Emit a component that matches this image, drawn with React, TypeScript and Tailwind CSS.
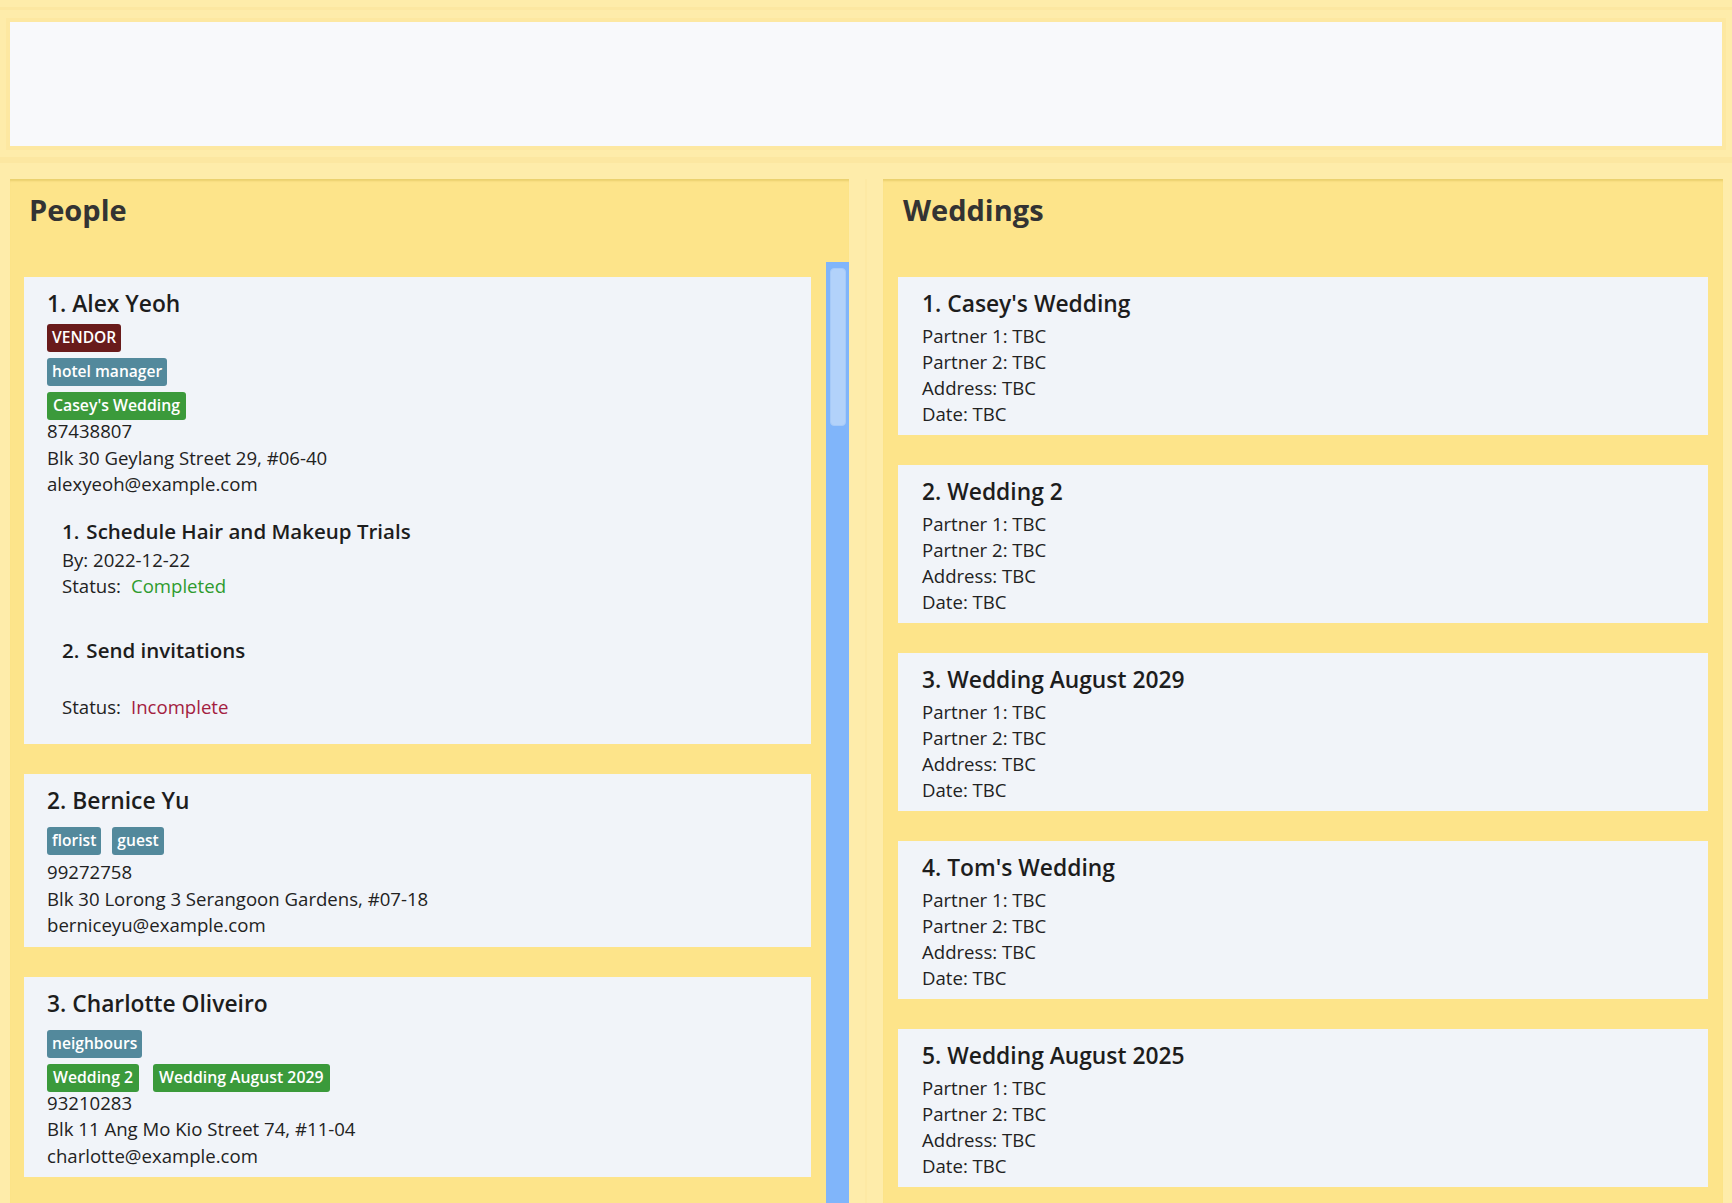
import React from "react";

type Person = {
  name: string;
  vendor?: boolean;
  tags: string[];
  weddings: string[];
  phone: string;
  address: string;
  email: string;
  tasks?: { title: string; by?: string; done: boolean }[];
};

const PEOPLE: Person[] = [
  {
    name: "Alex Yeoh",
    vendor: true,
    tags: ["hotel manager"],
    weddings: ["Casey's Wedding"],
    phone: "87438807",
    address: "Blk 30 Geylang Street 29, #06-40",
    email: "alexyeoh@example.com",
    tasks: [
      { title: "Schedule Hair and Makeup Trials", by: "2022-12-22", done: true },
      { title: "Send invitations", done: false },
    ],
  },
  {
    name: "Bernice Yu",
    tags: ["florist", "guest"],
    weddings: [],
    phone: "99272758",
    address: "Blk 30 Lorong 3 Serangoon Gardens, #07-18",
    email: "berniceyu@example.com",
  },
  {
    name: "Charlotte Oliveiro",
    tags: ["neighbours"],
    weddings: ["Wedding 2", "Wedding August 2029"],
    phone: "93210283",
    address: "Blk 11 Ang Mo Kio Street 74, #11-04",
    email: "charlotte@example.com",
  },
];

const WEDDINGS = [
  "Casey's Wedding",
  "Wedding 2",
  "Wedding August 2029",
  "Tom's Wedding",
  "Wedding August 2025",
];

const Tag = ({ label, color }: { label: string; color: string }) => (
  <span
    className={`${color} flex h-[28px] items-center rounded-[3px] px-[5px] text-[15.6px] font-semibold text-white`}
  >
    {label}
  </span>
);

const PersonCard = ({ p, i }: { p: Person; i: number }) => (
  <div className={`bg-[#F1F4F9] px-[23px] pt-[11px] ${p.tasks ? "pb-[7px]" : "pb-[8px]"}`}>
    <div className="text-[22.8px] font-semibold leading-[32px] text-[#1d1d1d]">
      {i + 1}. {p.name}
    </div>
    <div className="mt-[4px] flex flex-col gap-[6px]">
      <div className="flex gap-[11px]">
        {p.vendor && <Tag label="VENDOR" color="bg-[#691B1B]" />}
      </div>
      <div className="flex gap-[11px]">
        {p.tags.map((t) => (
          <Tag key={t} label={t} color="bg-[#53899C]" />
        ))}
      </div>
      <div className="flex gap-[14px]">
        {p.weddings.map((t) => (
          <span
            key={t}
            className="flex h-[28px] items-center rounded-[3px] bg-[#3B9A3B] px-[6px] text-[15.8px] font-semibold text-white"
          >
            {t}
          </span>
        ))}
      </div>
    </div>
    <div className="-mt-[2px] text-[18.6px] leading-[26.5px]">
      <div>{p.phone}</div>
      <div>{p.address}</div>
      <div>{p.email}</div>
    </div>
    {p.tasks && (
      <div className="pl-[15px]">
        {p.tasks.map((t, k) => (
          <div key={k} className="pt-[18px] pb-[17px]">
            <div className="text-[20.5px] font-semibold leading-[30px] text-[#1d1d1d]">
              {k + 1}.<span className="ml-[7px]">{t.title}</span>
            </div>
            <div className="mt-[1px] text-[18.6px] leading-[26.5px]">
              <div className={t.by ? "" : "h-[28px]"}>{t.by ? `By: ${t.by}` : "\u00a0"}</div>
              <div>
                Status:
                <span className={`ml-[10px] ${t.done ? "text-[#2E9B2E]" : "text-[#A3203F]"}`}>
                  {t.done ? "Completed" : "Incomplete"}
                </span>
              </div>
            </div>
          </div>
        ))}
      </div>
    )}
  </div>
);

const WeddingCard = ({ name, i }: { name: string; i: number }) => (
  <div className="bg-[#F1F4F9] px-[24px] pt-[11px] pb-[8px]">
    <div className="mb-[3px] text-[22.8px] font-semibold leading-[32px] text-[#1d1d1d]">
      {i + 1}. {name}
    </div>
    <div className="text-[18.6px] leading-[26px]">
      <div>Partner 1: TBC</div>
      <div>Partner 2: TBC</div>
      <div>Address: TBC</div>
      <div>Date: TBC</div>
    </div>
  </div>
);

export default function App() {
  return (
    <div className="flex h-screen flex-col overflow-hidden bg-[#FEECAA] font-['Open_Sans',sans-serif] text-[#222]">
      <div className="h-[7px] shrink-0" />
      <div className="h-[3px] shrink-0 bg-[#FCE7A1]" />
      {/* result box */}
      <div className="shrink-0 px-[6px] pt-[8px] pb-[7px]">
        <div className="h-[132px] border-4 border-[#FDE8A1] bg-[#F8F9FB]" />
      </div>
      <div className="h-[6px] shrink-0 bg-[#FCE7A1]" />

      <div className="flex min-h-0 flex-1 pt-[16px] pr-[9px] pl-[10px]">
        {/* people */}
        <div className="flex w-[839px] shrink-0 flex-col bg-[#FDE48A] shadow-[inset_0_3px_2px_-1px_rgba(200,170,60,0.35)]">
          <div className="h-[83px] shrink-0 px-[19px] pt-[11px] text-[29px] font-bold leading-[40px] text-[#333]">
            People
          </div>
          <div className="flex min-h-0 flex-1">
            <div className="flex min-w-0 flex-1 flex-col gap-[30px] overflow-hidden pt-[15px] pr-[15px] pl-[14px]">
              {PEOPLE.map((p, i) => (
                <PersonCard key={p.name} p={p} i={i} />
              ))}
            </div>
            <div className="w-[23px] shrink-0 bg-[#80B5FA] pt-[6px] pr-[3px] pl-[4px]">
              <div className="h-[158px] rounded-[4px] border border-[#A6CAF8] bg-[#B2D2FA]" />
            </div>
          </div>
        </div>

        {/* divider */}
        <div className="flex w-[34px] shrink-0">
          <div className="w-[16px]" />
          <div className="w-[2px] bg-[#FDE9A4]" />
        </div>

        {/* weddings */}
        <div className="flex min-w-0 flex-1 flex-col bg-[#FDE48A] shadow-[inset_0_3px_2px_-1px_rgba(200,170,60,0.35)]">
          <div className="h-[83px] shrink-0 px-[20px] pt-[11px] text-[29px] font-bold leading-[40px] text-[#333]">
            Weddings
          </div>
          <div className="flex min-h-0 flex-1 flex-col gap-[30px] overflow-hidden px-[15px] pt-[15px]">
            {WEDDINGS.map((w, i) => (
              <WeddingCard key={w} name={w} i={i} />
            ))}
          </div>
        </div>
      </div>
    </div>
  );
}
